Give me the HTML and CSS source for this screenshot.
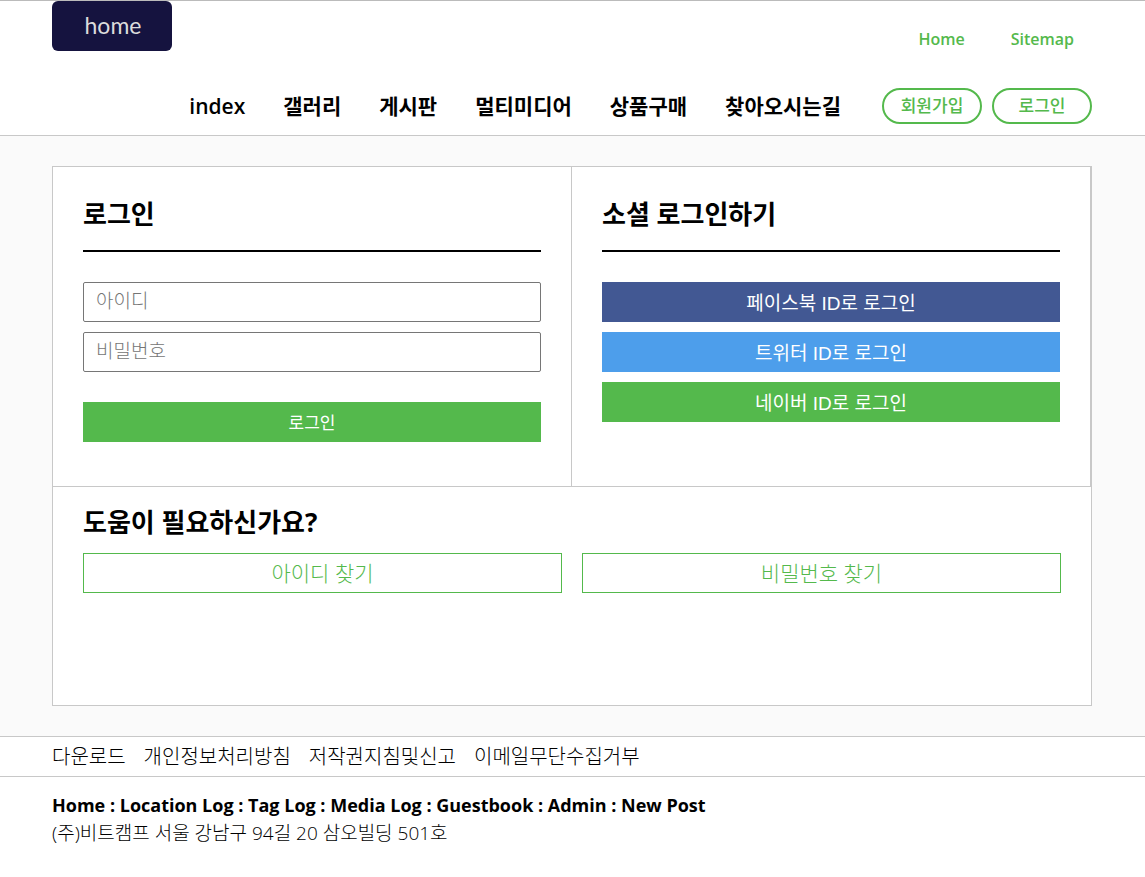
FILE: index.html
```html
<!DOCTYPE html>
<html lang="ko">
<head>
<meta charset="utf-8">
<meta name="viewport" content="width=device-width, initial-scale=1">
<title>로그인</title>
<link rel="stylesheet" href="styles.css">
</head>
<body>
<header class="header">
  <div class="container">
    <div class="header-top">
      <a class="logo" href="#">home</a>
      <nav class="utility">
        <a href="#">Home</a>
        <a href="#">Sitemap</a>
      </nav>
    </div>
    <div class="header-bottom">
      <nav class="menu">
        <a href="#">index</a>
        <a href="#">갤러리</a>
        <a href="#">게시판</a>
        <a href="#">멀티미디어</a>
        <a href="#">상품구매</a>
        <a href="#">찾아오시는길</a>
      </nav>
      <div class="account">
        <a class="pill" href="#">회원가입</a>
        <a class="pill" href="#">로그인</a>
      </div>
    </div>
  </div>
</header>
<main class="main">
  <div class="container card">
    <div class="panels">
      <section class="panel">
        <h2 class="title title-ruled">로그인</h2>
        <form class="login">
          <input class="field" type="text" placeholder="아이디" aria-label="아이디">
          <input class="field" type="password" placeholder="비밀번호" aria-label="비밀번호">
          <button class="submit" type="submit">로그인</button>
        </form>
      </section>
      <section class="panel">
        <h2 class="title title-ruled">소셜 로그인하기</h2>
        <div class="social">
          <button class="social-button facebook" type="button">페이스북 ID로 로그인</button>
          <button class="social-button twitter" type="button">트위터 ID로 로그인</button>
          <button class="social-button naver" type="button">네이버 ID로 로그인</button>
        </div>
      </section>
    </div>
    <section class="help">
      <h2 class="title">도움이 필요하신가요?</h2>
      <div class="help-links">
        <a class="help-link" href="#">아이디 찾기</a>
        <a class="help-link" href="#">비밀번호 찾기</a>
      </div>
    </section>
  </div>
</main>
<footer>
  <div class="footer-links">
    <nav class="container policy">
      <a href="#">다운로드</a>
      <a href="#">개인정보처리방침</a>
      <a href="#">저작권지침및신고</a>
      <a href="#">이메일무단수집거부</a>
    </nav>
  </div>
  <div class="container info">
    <p class="info-strong">Home : Location Log : Tag Log : Media Log : Guestbook : Admin : New Post</p>
    <p>(주)비트캠프 서울 강남구 94길 20 삼오빌딩 501호</p>
  </div>
</footer>
</body>
</html>
```
FILE: styles.css
```css
* { box-sizing: border-box; }

body {
  margin: 0;
  color: #000;
  background: #fff;
  font-family: "Open Sans", "Noto Sans CJK KR", sans-serif;
  font-size: 19px;
  font-weight: 300;
  line-height: 28px;
}

a { color: inherit; text-decoration: none; }
h2, p { margin: 0; }
button, input { font: inherit; }

/* Centred column, kept on whole pixels so that borders stay crisp */
.container {
  width: calc(100% - 40px);
  max-width: 1040px;
  margin: 0 auto;
  margin-left: max(20px, round(down, (100% - 1040px) / 2, 1px));
}

.header {
  border-top: 1px solid #bbb;
  border-bottom: 1px solid #c8c8c8;
}

.header-top {
  display: flex;
  justify-content: space-between;
  align-items: flex-start;
}

.logo {
  width: 120px;
  padding: 0 0 2px 2px;
  border-radius: 6px;
  background: #15133f;
  color: #dcdcdc;
  font-family: Lato, sans-serif;
  font-size: 23px;
  font-weight: 400;
  line-height: 48px;
  text-align: center;
}

.utility {
  display: flex;
  gap: 46px;
  padding: 24px 18px 0 0;
  color: #54b94c;
  font-size: 16px;
  font-weight: 600;
}

.header-bottom {
  display: flex;
  justify-content: flex-end;
  align-items: center;
  gap: 41px;
  padding: 35px 0 11px;
}

.menu {
  display: flex;
  gap: 38px;
  font-size: 21px;
  font-weight: 600;
}

.account { display: flex; gap: 10px; }

.pill {
  width: 100px;
  border: 2px solid #54b94c;
  border-radius: 18px;
  color: #54b94c;
  font-size: 17px;
  font-weight: 500;
  line-height: 32px;
  text-align: center;
}

.main {
  padding: 30px 0;
  background: #fafafa;
}

.card {
  border: 1px solid #c8c8c8;
  background: #fff;
}

.panels {
  display: grid;
  grid-template-columns: 1fr 1fr;
}

.panel {
  min-height: 320px;
  padding: 30px;
  border-right: 1px solid #c8c8c8;
  border-bottom: 1px solid #c8c8c8;
}

.title {
  font-size: 26px;
  font-weight: 700;
  line-height: 34px;
}

.title-ruled {
  margin-bottom: 30px;
  padding-bottom: 19px;
  border-bottom: 2px solid #000;
}

.login, .social {
  display: flex;
  flex-direction: column;
  gap: 10px;
}

.field {
  width: 100%;
  height: 40px;
  padding: 0 12px 2px;
  border: 1px solid #767676;
  border-radius: 2px;
}

.field::placeholder { color: #757575; }

.submit, .social-button {
  height: 40px;
  padding: 2px 0 0;
  border: 0;
  color: #fff;
}

.submit {
  margin-top: 20px;
  background: #54b94c;
  font-size: 17px;
  font-weight: 400;
}

.social-button {
  padding-top: 3px;
  font-family: "Liberation Sans", "Noto Sans CJK KR", sans-serif;
  font-weight: 400;
}

.facebook { background: #425893; }
.twitter { background: #4d9eeb; }
.naver { background: #54b94c; }

.help {
  min-height: 218px;
  padding: 18px 30px;
}

.help-links {
  display: grid;
  grid-template-columns: 1fr 1fr;
  gap: 20px;
  margin-top: 14px;
}

.help-link {
  border: 1px solid #54b94c;
  color: #54b94c;
  font-size: 21px;
  line-height: 38px;
  text-align: center;
}

.footer-links {
  border-top: 1px solid #c8c8c8;
  border-bottom: 1px solid #c8c8c8;
}

.policy {
  display: flex;
  flex-wrap: wrap;
  gap: 0 18px;
  font-size: 20px;
  line-height: 39px;
}

.info { padding: 14px 0; }

.info-strong {
  font-size: 18px;
  font-weight: 700;
}
```
